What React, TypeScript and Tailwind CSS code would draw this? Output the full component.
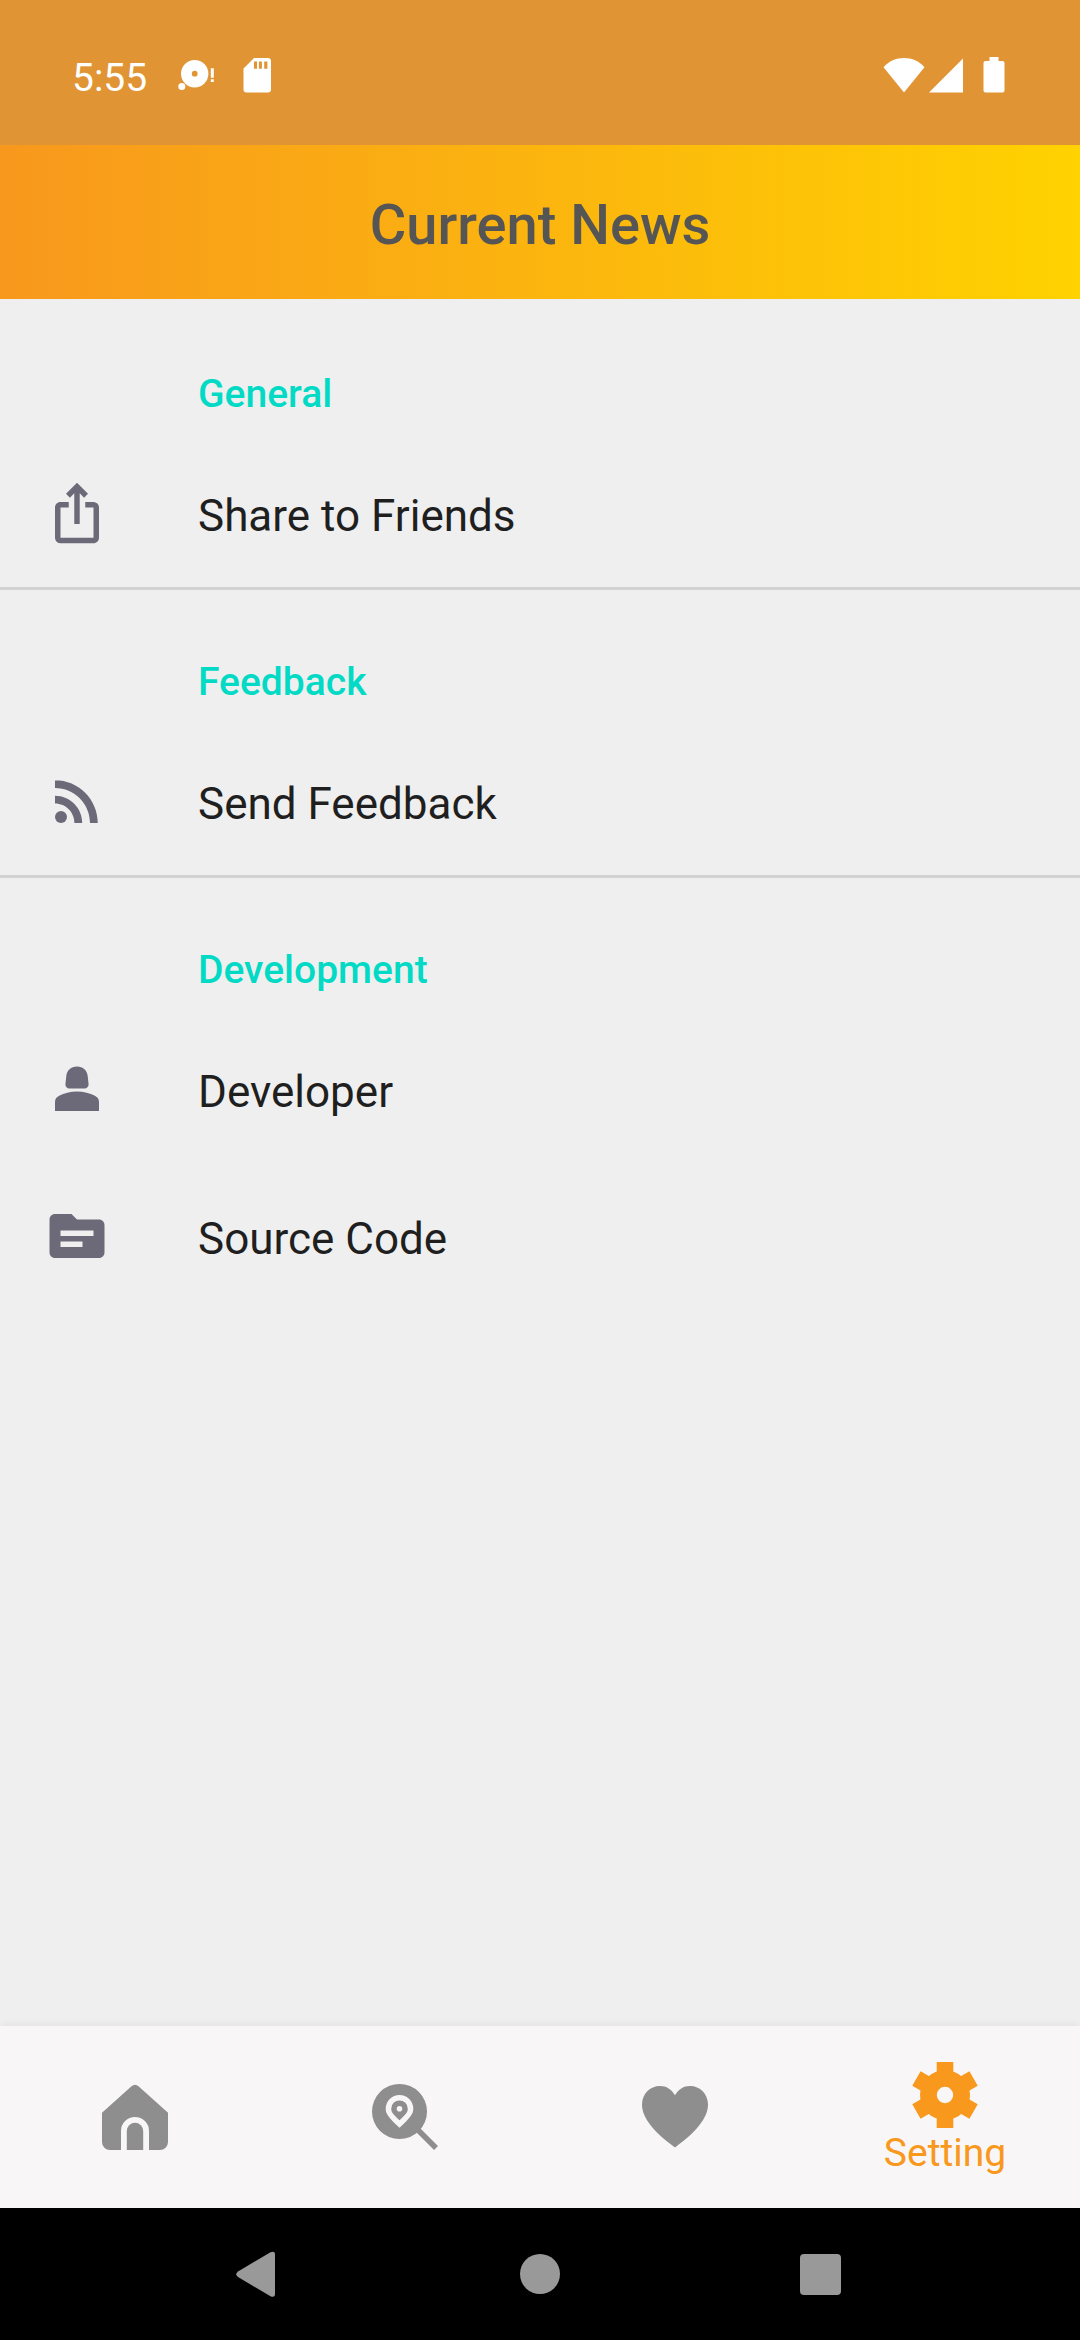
import type { ReactNode } from "react";
import { MdIosShare, MdRssFeed, MdSource } from "react-icons/md";

function StatusBar() {
  return (
    <div className="flex h-[145px] shrink-0 items-center justify-between bg-[#e19433] pt-[5px] pr-[75px] pl-[72px] text-white">
      <div className="flex items-center">
        <span className="pt-1.5 text-[39px] leading-[46px]">5:55</span>
        <svg className="ml-7 h-9 w-10" viewBox="0 0 40 36" fill="currentColor" aria-hidden="true">
          <path
            fillRule="evenodd"
            d="M19.7 3a13.7 13.7 0 1 1 0 27.4a13.7 13.7 0 0 1 0-27.4zM19.7 13.8a2.9 2.9 0 1 0 0 5.8a2.9 2.9 0 0 0 0-5.8z"
          />
          <circle cx="6.8" cy="29.6" r="3.5" />
          <path d="M35.8 11.2h3v9.6h-3zM35.8 22.2h3v2.9h-3z" />
        </svg>
        <svg className="ml-7 h-9 w-7" viewBox="0 0 28 36" fill="currentColor" aria-hidden="true">
          <path
            fillRule="evenodd"
            d="M11 1h14a3 3 0 0 1 3 3v28.500a3 3 0 0 1-3 3H3.500a3 3 0 0 1-3-3V11.500zM11 4.600v7.200h3V4.600zM15.900 4.600v7.200h3V4.600zM21.200 4.600v7.200h3.200V4.600z"
          />
        </svg>
      </div>
      <div className="flex items-center">
        <svg className="h-9 w-[42px]" viewBox="0 0 42 36" fill="currentColor" aria-hidden="true">
          <path d="M0.500 10.200C6 4 13 1 21 1s15 3 20.500 9.200L21 35.500z" />
        </svg>
        <svg className="ml-1 h-9 w-[34px]" viewBox="0 0 34 36" fill="currentColor" aria-hidden="true">
          <path d="M34 1.500v34H0z" />
        </svg>
        <svg className="ml-5 h-9 w-[22px]" viewBox="0 0 22 36" fill="currentColor" aria-hidden="true">
          <path d="M6.500 0h9v4H19.500a2 2 0 0 1 2 2v27.500a2 2 0 0 1-2 2h-17a2 2 0 0 1-2-2V6a2 2 0 0 1 2-2h4z" />
        </svg>
      </div>
    </div>
  );
}

function PersonIcon() {
  return (
    <svg className="size-[66px]" viewBox="0 0 24 24" fill="currentColor" aria-hidden="true">
      <path d="M12 3.850c2.200 0 3.700 1.450 3.900 3.500l.3 2.750c.1 1-.6 1.750-1.600 1.750H9.400c-1 0-1.700-.75-1.600-1.750l.3-2.750c.2-2.050 1.700-3.500 3.900-3.500z" />
      <path d="M4 20v-3.200c0-1.100.5-1.850 1.500-2.350C7.300 13.500 9.500 12.900 12 12.900s4.700.6 6.500 1.550c1 .5 1.500 1.250 1.500 2.350V20z" />
    </svg>
  );
}

function HomeIcon() {
  return (
    <svg className="size-[66px]" viewBox="0 0 66 66" fill="currentColor" aria-hidden="true">
      <path d="M29.500 2.200q3.500-3 7 0L66 28.700V58a8 8 0 0 1-8 8H47V47a14 14 0 0 0-28 0V66H8a8 8 0 0 1-8-8V28.700z" />
      <path d="M24.800 66V47a8.200 8.200 0 0 1 16.400 0V66z" />
    </svg>
  );
}

function ExploreIcon() {
  return (
    <svg className="size-[66px]" viewBox="0 0 66 66" fill="currentColor" aria-hidden="true">
      <path
        fillRule="evenodd"
        d="M27.500 0a27.500 27.500 0 1 1 0 55a27.500 27.500 0 0 1 0-55zM27.500 10.900A13.800 13.800 0 0 0 13.700 24.700C13.700 30 16.500 33.200 27.500 43.800C38.500 33.200 41.300 30 41.300 24.700A13.800 13.800 0 0 0 27.500 10.900z"
      />
      <path
        fillRule="evenodd"
        d="M27.500 16.400A8.300 8.300 0 0 1 35.800 24.700C35.800 28.500 33 31 27.500 36.300C22 31 19.200 28.500 19.200 24.700A8.300 8.300 0 0 1 27.500 16.400zM27.500 21.900a2.800 2.800 0 1 0 0 5.600a2.800 2.800 0 0 0 0-5.600z"
      />
      <path d="M46 46L64 64" stroke="currentColor" strokeWidth="5.500" />
    </svg>
  );
}

function HeartIcon() {
  return (
    <svg className="size-[66px]" viewBox="0 0 66 66" fill="currentColor" aria-hidden="true">
      <path d="M33 11.300C29.500 5.300 24.500 2 18 2C8 2 0 10 0 20.500C0 34 12 48 33 63.500C54 48 66 34 66 20.500C66 10 58 2 48 2C41.500 2 36.500 5.300 33 11.300z" />
    </svg>
  );
}

function GearIcon() {
  return (
    <svg className="size-[66px]" viewBox="0 0 66 66" fill="currentColor" aria-hidden="true">
      <path d="M24.700 0h16.600v16h-16.600zM24.700 50h16.600v16h-16.600z" />
      <path d="M24.700 0h16.600v16h-16.600zM24.700 50h16.600v16h-16.600z" transform="rotate(60 33 33)" />
      <path d="M24.700 0h16.600v16h-16.600zM24.700 50h16.600v16h-16.600z" transform="rotate(120 33 33)" />
      <path
        fillRule="evenodd"
        d="M33 8a25 25 0 1 1 0 50a25 25 0 0 1 0-50zM33 24.800a8.200 8.200 0 1 0 0 16.400a8.200 8.200 0 0 0 0-16.400z"
      />
    </svg>
  );
}

function Row({ icon, label }: { icon: ReactNode; label: string }) {
  return (
    <button type="button" className="flex h-[147px] w-full items-center gap-[88px] px-11 text-left">
      <span className="text-[#6c6a78]">{icon}</span>
      <span className="pt-1.5 text-[44px] leading-[52px] text-[#1f1f1f]">{label}</span>
    </button>
  );
}

function Section({ title, divided, children }: { title: string; divided?: boolean; children: ReactNode }) {
  return (
    <section className={divided ? "border-t-[3px] border-[#d2d2d2]" : "pt-[3px]"}>
      <h2 className="flex h-[137px] items-center pt-[46px] pl-[198px] text-[39px] leading-[46px] font-medium text-[#03dac5]">
        {title}
      </h2>
      {children}
    </section>
  );
}

function Tab({ icon, name, active }: { icon: ReactNode; name: string; active?: boolean }) {
  return (
    <button
      type="button"
      aria-label={name}
      aria-current={active ? "page" : undefined}
      className={
        active
          ? "flex flex-1 flex-col items-center justify-center gap-0.5 pt-1 text-[#f8981d]"
          : "flex flex-1 flex-col items-center justify-center text-[#8e8e8e]"
      }
    >
      {icon}
      {active && <span className="text-[39px] leading-[46px]">{name}</span>}
    </button>
  );
}

export default function App() {
  return (
    <div className="flex min-h-screen flex-col bg-[#efefef] font-['Roboto',sans-serif]">
      <StatusBar />
      <header className="flex h-[154px] shrink-0 items-center justify-center bg-linear-to-r/srgb from-[#f8981d] to-[#ffd200] pt-1.5">
        <h1 className="text-[56px] leading-[64px] font-medium text-[#555555]">Current News</h1>
      </header>

      <main className="flex flex-1 flex-col gap-px">
        <Section title="General">
          <Row icon={<MdIosShare className="size-[66px]" />} label="Share to Friends" />
        </Section>
        <Section title="Feedback" divided>
          <Row icon={<MdRssFeed className="size-[66px]" />} label="Send Feedback" />
        </Section>
        <Section title="Development" divided>
          <Row icon={<PersonIcon />} label="Developer" />
          <Row icon={<MdSource className="size-[66px]" />} label="Source Code" />
        </Section>
      </main>

      <nav className="flex h-[182px] shrink-0 bg-[#f8f6f7] shadow-[0_0_10px_rgba(0,0,0,0.08)]">
        <Tab icon={<HomeIcon />} name="Home" />
        <Tab icon={<ExploreIcon />} name="Explore" />
        <Tab icon={<HeartIcon />} name="Favorites" />
        <Tab icon={<GearIcon />} name="Setting" active />
      </nav>

      <div className="flex h-[132px] shrink-0 items-center justify-center gap-[214px] bg-black text-[#999999]">
        <button type="button" aria-label="Back">
          <svg className="size-[66px]" viewBox="0 0 66 66" fill="currentColor" aria-hidden="true">
            <path d="M11 30.500L43.500 11.300Q48 9.500 48 13.500V53Q48 57 43.500 55.200L11 36Q7.500 33.300 11 30.500z" />
          </svg>
        </button>
        <button type="button" aria-label="Home screen">
          <svg className="size-[66px]" viewBox="0 0 66 66" fill="currentColor" aria-hidden="true">
            <circle cx="33" cy="33" r="20" />
          </svg>
        </button>
        <button type="button" aria-label="Recent apps">
          <svg className="size-[66px]" viewBox="0 0 66 66" fill="currentColor" aria-hidden="true">
            <rect x="13" y="13" width="41" height="41" rx="4" />
          </svg>
        </button>
      </div>
    </div>
  );
}
